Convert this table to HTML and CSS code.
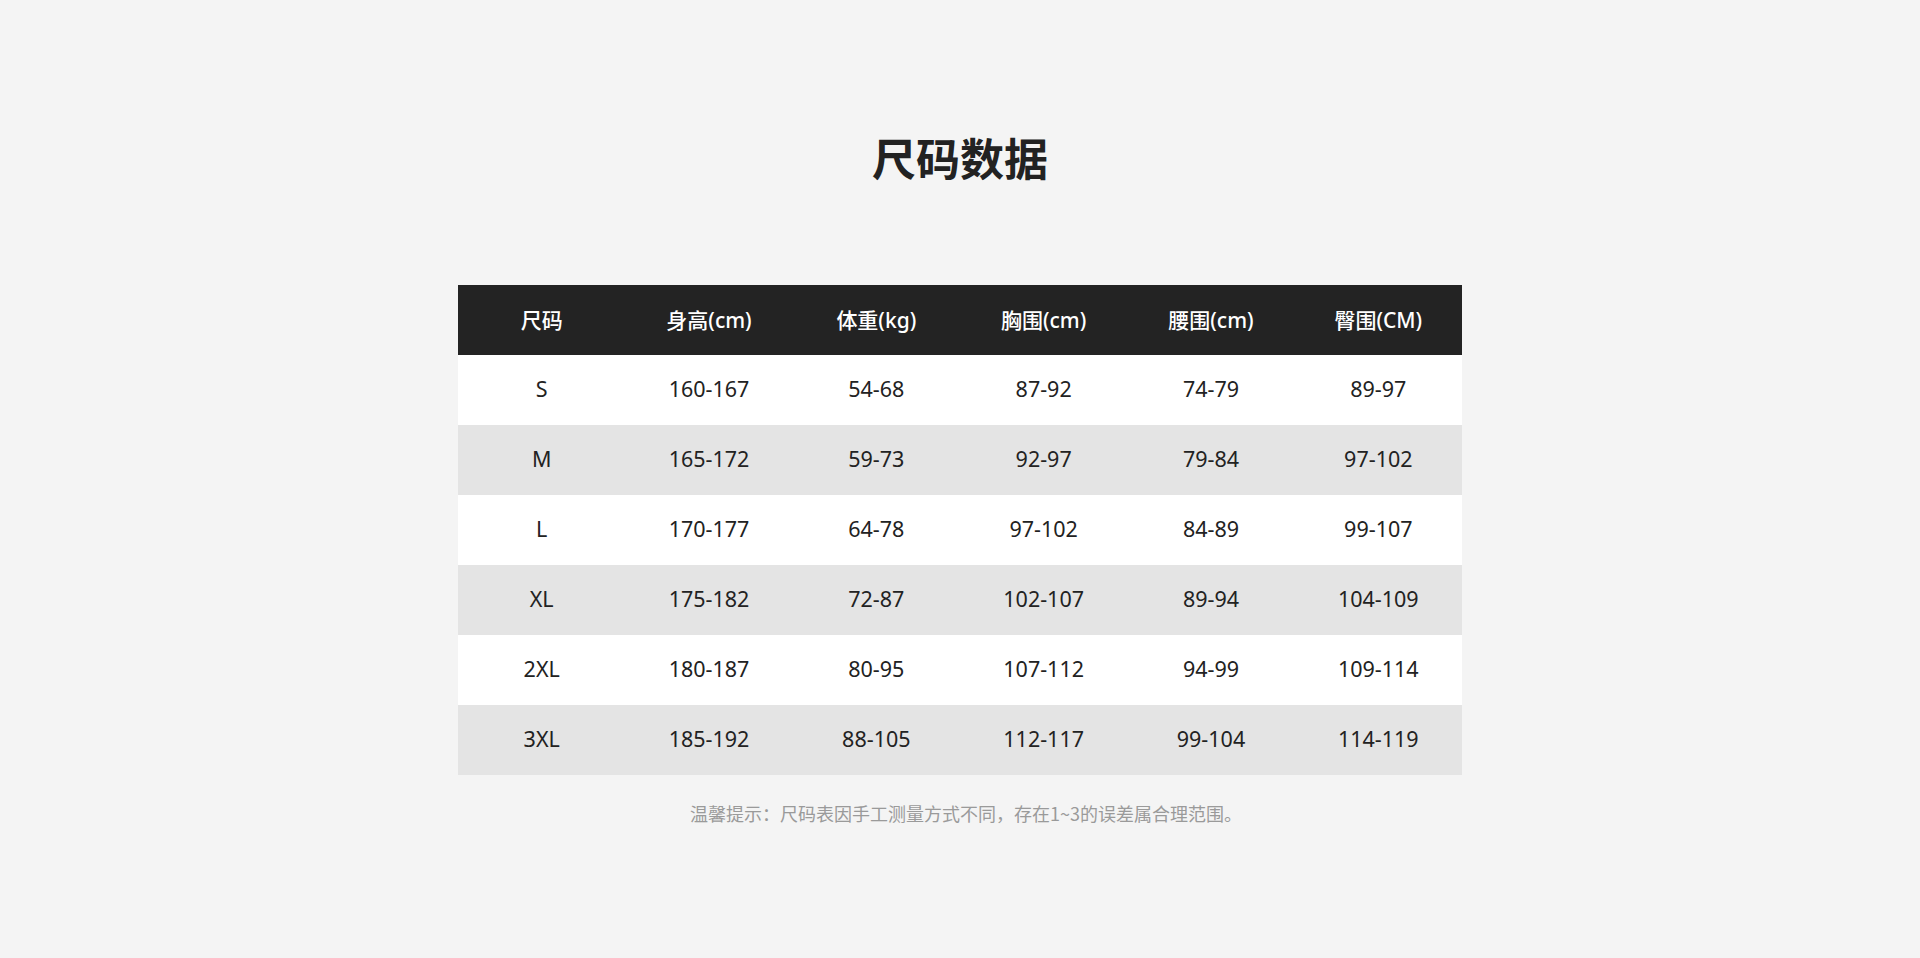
FILE: index.html
```html
<!DOCTYPE html>
<html lang="zh-CN">
<head>
<meta charset="utf-8">
<title>尺码数据</title>
<link rel="stylesheet" href="styles.css">
</head>
<body>
<main class="page">
  <h1 class="title">尺码数据</h1>
  <table class="size-table">
    <thead>
      <tr>
        <th>尺码</th>
        <th>身高(cm)</th>
        <th>体重(kg)</th>
        <th>胸围(cm)</th>
        <th>腰围(cm)</th>
        <th>臀围(CM)</th>
      </tr>
    </thead>
    <tbody>
      <tr><td>S</td><td>160-167</td><td>54-68</td><td>87-92</td><td>74-79</td><td>89-97</td></tr>
      <tr><td>M</td><td>165-172</td><td>59-73</td><td>92-97</td><td>79-84</td><td>97-102</td></tr>
      <tr><td>L</td><td>170-177</td><td>64-78</td><td>97-102</td><td>84-89</td><td>99-107</td></tr>
      <tr><td>XL</td><td>175-182</td><td>72-87</td><td>102-107</td><td>89-94</td><td>104-109</td></tr>
      <tr><td>2XL</td><td>180-187</td><td>80-95</td><td>107-112</td><td>94-99</td><td>109-114</td></tr>
      <tr><td>3XL</td><td>185-192</td><td>88-105</td><td>112-117</td><td>99-104</td><td>114-119</td></tr>
    </tbody>
  </table>
  <p class="note">温馨提示：尺码表因手工测量方式不同，存在1~3的误差属合理范围。</p>
</main>
</body>
</html>
```

FILE: styles.css
```css
html, body {
  margin: 0;
  padding: 0;
}

body {
  background: #f4f4f4;
  font-family: "Noto Sans", "Noto Sans CJK SC", sans-serif;
  color: #222222;
}

.page {
  display: flex;
  flex-direction: column;
  align-items: center;
  padding-top: 127px;
}

.title {
  margin: 0 0 98px 0;
  height: 60px;
  line-height: 60px;
  font-size: 44px;
  font-weight: 700;
  color: #222222;
  font-family: "Noto Sans CJK SC", "Noto Sans", sans-serif;
}

.size-table {
  width: 1004px;
  border-collapse: collapse;
  table-layout: fixed;
}

.size-table th,
.size-table td {
  box-sizing: border-box;
  height: 70px;
  padding: 0 0 3px 0;
  text-align: center;
  vertical-align: middle;
}

.size-table th {
  background: #232323;
  color: #ffffff;
  font-size: 21px;
  font-weight: 500;
}

.size-table td {
  font-size: 21.5px;
  font-weight: 400;
  color: #222222;
}

.size-table tbody tr:nth-child(odd) td {
  background: #ffffff;
}

.size-table tbody tr:nth-child(even) td {
  background: #e4e4e4;
}

.note {
  margin: 26px 0 0 0;
  padding-left: 12px;
  line-height: 24px;
  font-size: 18px;
  color: #9a9a9a;
  font-family: "Noto Sans CJK SC", "Noto Sans", sans-serif;
}
```
